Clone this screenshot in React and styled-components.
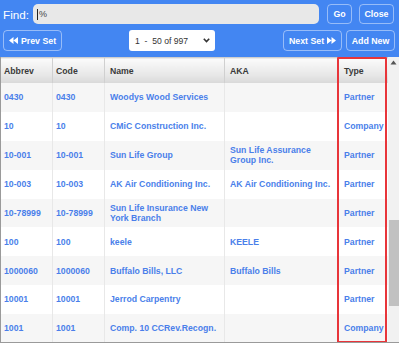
import styled, {createGlobalStyle} from 'styled-components';

const rows = [
  {abbrev: '0430', code: '0430', name: 'Woodys Wood Services', aka: '', type: 'Partner'},
  {abbrev: '10', code: '10', name: 'CMiC Construction Inc.', aka: '', type: 'Company'},
  {abbrev: '10-001', code: '10-001', name: 'Sun Life Group', aka: 'Sun Life Assurance Group Inc.', type: 'Partner'},
  {abbrev: '10-003', code: '10-003', name: 'AK Air Conditioning Inc.', aka: 'AK Air Conditioning Inc.', type: 'Partner'},
  {abbrev: '10-78999', code: '10-78999', name: 'Sun Life Insurance New York Branch', aka: '', type: 'Partner'},
  {abbrev: '100', code: '100', name: 'keele', aka: 'KEELE', type: 'Partner'},
  {abbrev: '1000060', code: '1000060', name: 'Buffalo Bills, LLC', aka: 'Buffalo Bills', type: 'Partner'},
  {abbrev: '10001', code: '10001', name: 'Jerrod Carpentry', aka: '', type: 'Partner'},
  {abbrev: '1001', code: '1001', name: 'Comp. 10 CCRev.Recogn.', aka: '', type: 'Company'},
];

const columns = [
  {key: 'abbrev', label: 'Abbrev', width: 52, pad: 3},
  {key: 'code', label: 'Code', width: 52, pad: 3},
  {key: 'name', label: 'Name', width: 120, pad: 5},
  {key: 'aka', label: 'AKA', width: 113, pad: 5},
  {key: 'type', label: 'Type', width: 50, pad: 6},
];

function Rewind() {
  return (
    <svg width="9" height="7" viewBox="0 0 9 7">
      <path d="M4.5 0 L0 3.5 L4.5 7 Z M9 0 L4.5 3.5 L9 7 Z" fill="#fff" />
    </svg>
  );
}

function Forward() {
  return (
    <svg width="9" height="7" viewBox="0 0 9 7">
      <path d="M0 0 L4.5 3.5 L0 7 Z M4.5 0 L9 3.5 L4.5 7 Z" fill="#fff" />
    </svg>
  );
}

export default function App() {
  return (
    <>
      <GlobalStyle />
      <Page>
        <Toolbar>
          <ToolRow>
            <FindLabel>Find:</FindLabel>
            <FindInput>
              <Caret />%
            </FindInput>
            <ToolButton $width={25} $gapLeft={8}>Go</ToolButton>
            <ToolButton $width={35} $gapLeft={7}>Close</ToolButton>
          </ToolRow>
          <ToolRow>
            <ToolButton $width={59} $tall>
              <Rewind /> Prev Set
            </ToolButton>
            <SelectBox>
              <span>1&nbsp;&nbsp;-&nbsp;&nbsp;50 of 997</span>
              <svg width="7" height="5" viewBox="0 0 7 5">
                <path d="M0.8 0.8 L3.5 3.6 L6.2 0.8" stroke="#333" strokeWidth="1.6" fill="none" />
              </svg>
            </SelectBox>
            <Spacer />
            <ToolButton $width={59} $tall>
              Next Set <Forward />
            </ToolButton>
            <ToolButton $width={49} $gapLeft={4} $tall>Add New</ToolButton>
          </ToolRow>
        </Toolbar>
        <GridArea>
          <TableWrap>
            <Table>
              <colgroup>
                {columns.map(c => (
                  <col key={c.key} style={{width: c.width}} />
                ))}
              </colgroup>
              <thead>
                <tr>
                  {columns.map(c => (
                    <HeadCell key={c.key} $pad={c.pad}>{c.label}</HeadCell>
                  ))}
                </tr>
              </thead>
              <tbody>
                {rows.map((r, i) => (
                  <Row key={r.abbrev} $odd={i % 2 === 0}>
                    {columns.map(c => (
                      <Cell key={c.key} $pad={c.pad}>{r[c.key]}</Cell>
                    ))}
                  </Row>
                ))}
              </tbody>
            </Table>
            <Highlight />
          </TableWrap>
          <ScrollTrack>
            <svg width="7" height="5" viewBox="0 0 7 5">
              <path d="M3.5 0.5 L6.5 4.5 L0.5 4.5 Z" fill="#555" />
            </svg>
            <ScrollThumb />
          </ScrollTrack>
        </GridArea>
      </Page>
    </>
  );
}

const GlobalStyle = createGlobalStyle`
  body {
    margin: 0;
    background: #fff;
    font-family: "Liberation Sans", Arial, sans-serif;
  }
`;

const Page = styled.div`
  width: 399px;
  height: 344px;
  overflow: hidden;
`;

const Toolbar = styled.div`
  background: #4386f2;
  height: 57px;
  box-sizing: border-box;
  padding: 4px 4px 0 3px;
  display: flex;
  flex-direction: column;
  gap: 6px;
`;

const ToolRow = styled.div`
  display: flex;
  align-items: center;
`;

const FindLabel = styled.span`
  color: #fff;
  font-size: 11.7px;
  width: 30px;
`;

const FindInput = styled.div`
  flex: 0 0 286px;
  height: 20px;
  background: #e8e8e8;
  border-radius: 5px;
  display: flex;
  align-items: center;
  padding-left: 4px;
  box-sizing: border-box;
  font-size: 9px;
  color: #444;
`;

const Caret = styled.span`
  display: inline-block;
  width: 1px;
  height: 11px;
  background: #222;
  margin-right: 1px;
`;

const ToolButton = styled.div`
  flex: 0 0 ${p => p.$width}px;
  margin-left: ${p => p.$gapLeft || 0}px;
  height: ${p => (p.$tall ? 21 : 20)}px;
  box-sizing: border-box;
  border: 1px solid rgba(255, 255, 255, 0.45);
  border-radius: 4px;
  display: flex;
  align-items: center;
  justify-content: center;
  gap: 3px;
  color: #fff;
  font-size: 8.8px;
  font-weight: bold;
`;

const SelectBox = styled.div`
  margin-left: 67px;
  width: 86px;
  height: 21px;
  background: #fff;
  border-radius: 3px;
  box-sizing: border-box;
  padding: 0 5px 0 6px;
  display: flex;
  align-items: center;
  justify-content: space-between;
  font-size: 8.6px;
  color: #333;
`;

const Spacer = styled.div`
  flex: 1;
`;

const GridArea = styled.div`
  display: flex;
  height: 286px;
  box-sizing: border-box;
  border-left: 1px solid #9a9a9a;
  border-bottom: 1px solid #9a9a9a;
`;

const TableWrap = styled.div`
  position: relative;
  width: 387px;
  overflow: hidden;
`;

const Table = styled.table`
  width: 387px;
  table-layout: fixed;
  border-collapse: collapse;
  margin-left: -1px;
`;

const HeadCell = styled.th`
  height: 25px;
  padding: 0 2px 0 ${p => p.$pad}px;
  text-align: left;
  font-size: 8.7px;
  font-weight: bold;
  color: #3a3a3a;
  background: linear-gradient(#fbfbfb, #e6e6e6 70%, #d8d8d8);
  border-top: 1px solid #cfcfcf;
  border-left: 1px solid #d0d0d0;
`;

const Row = styled.tr`
  background: ${p => (p.$odd ? '#f6f6f6' : '#ffffff')};
`;

const Cell = styled.td`
  height: 28.9px;
  box-sizing: border-box;
  padding: 0 2px 0 ${p => p.$pad}px;
  font-size: 8.7px;
  line-height: 10.5px;
  font-weight: bold;
  color: #4a7fea;
  border-left: 1px solid #e8e8e8;
  vertical-align: middle;
`;

const Highlight = styled.div`
  position: absolute;
  left: 336px;
  top: 0;
  bottom: -1px;
  width: 50px;
  box-sizing: border-box;
  border: 2.5px solid #e8353a;
  border-radius: 1px;
`;

const ScrollTrack = styled.div`
  flex: 1;
  background: #f1f1f1;
  display: flex;
  flex-direction: column;
  align-items: center;
  padding-top: 3px;
`;

const ScrollThumb = styled.div`
  margin-top: 155px;
  width: 10px;
  height: 86px;
  background: #c1c1c1;
`;
